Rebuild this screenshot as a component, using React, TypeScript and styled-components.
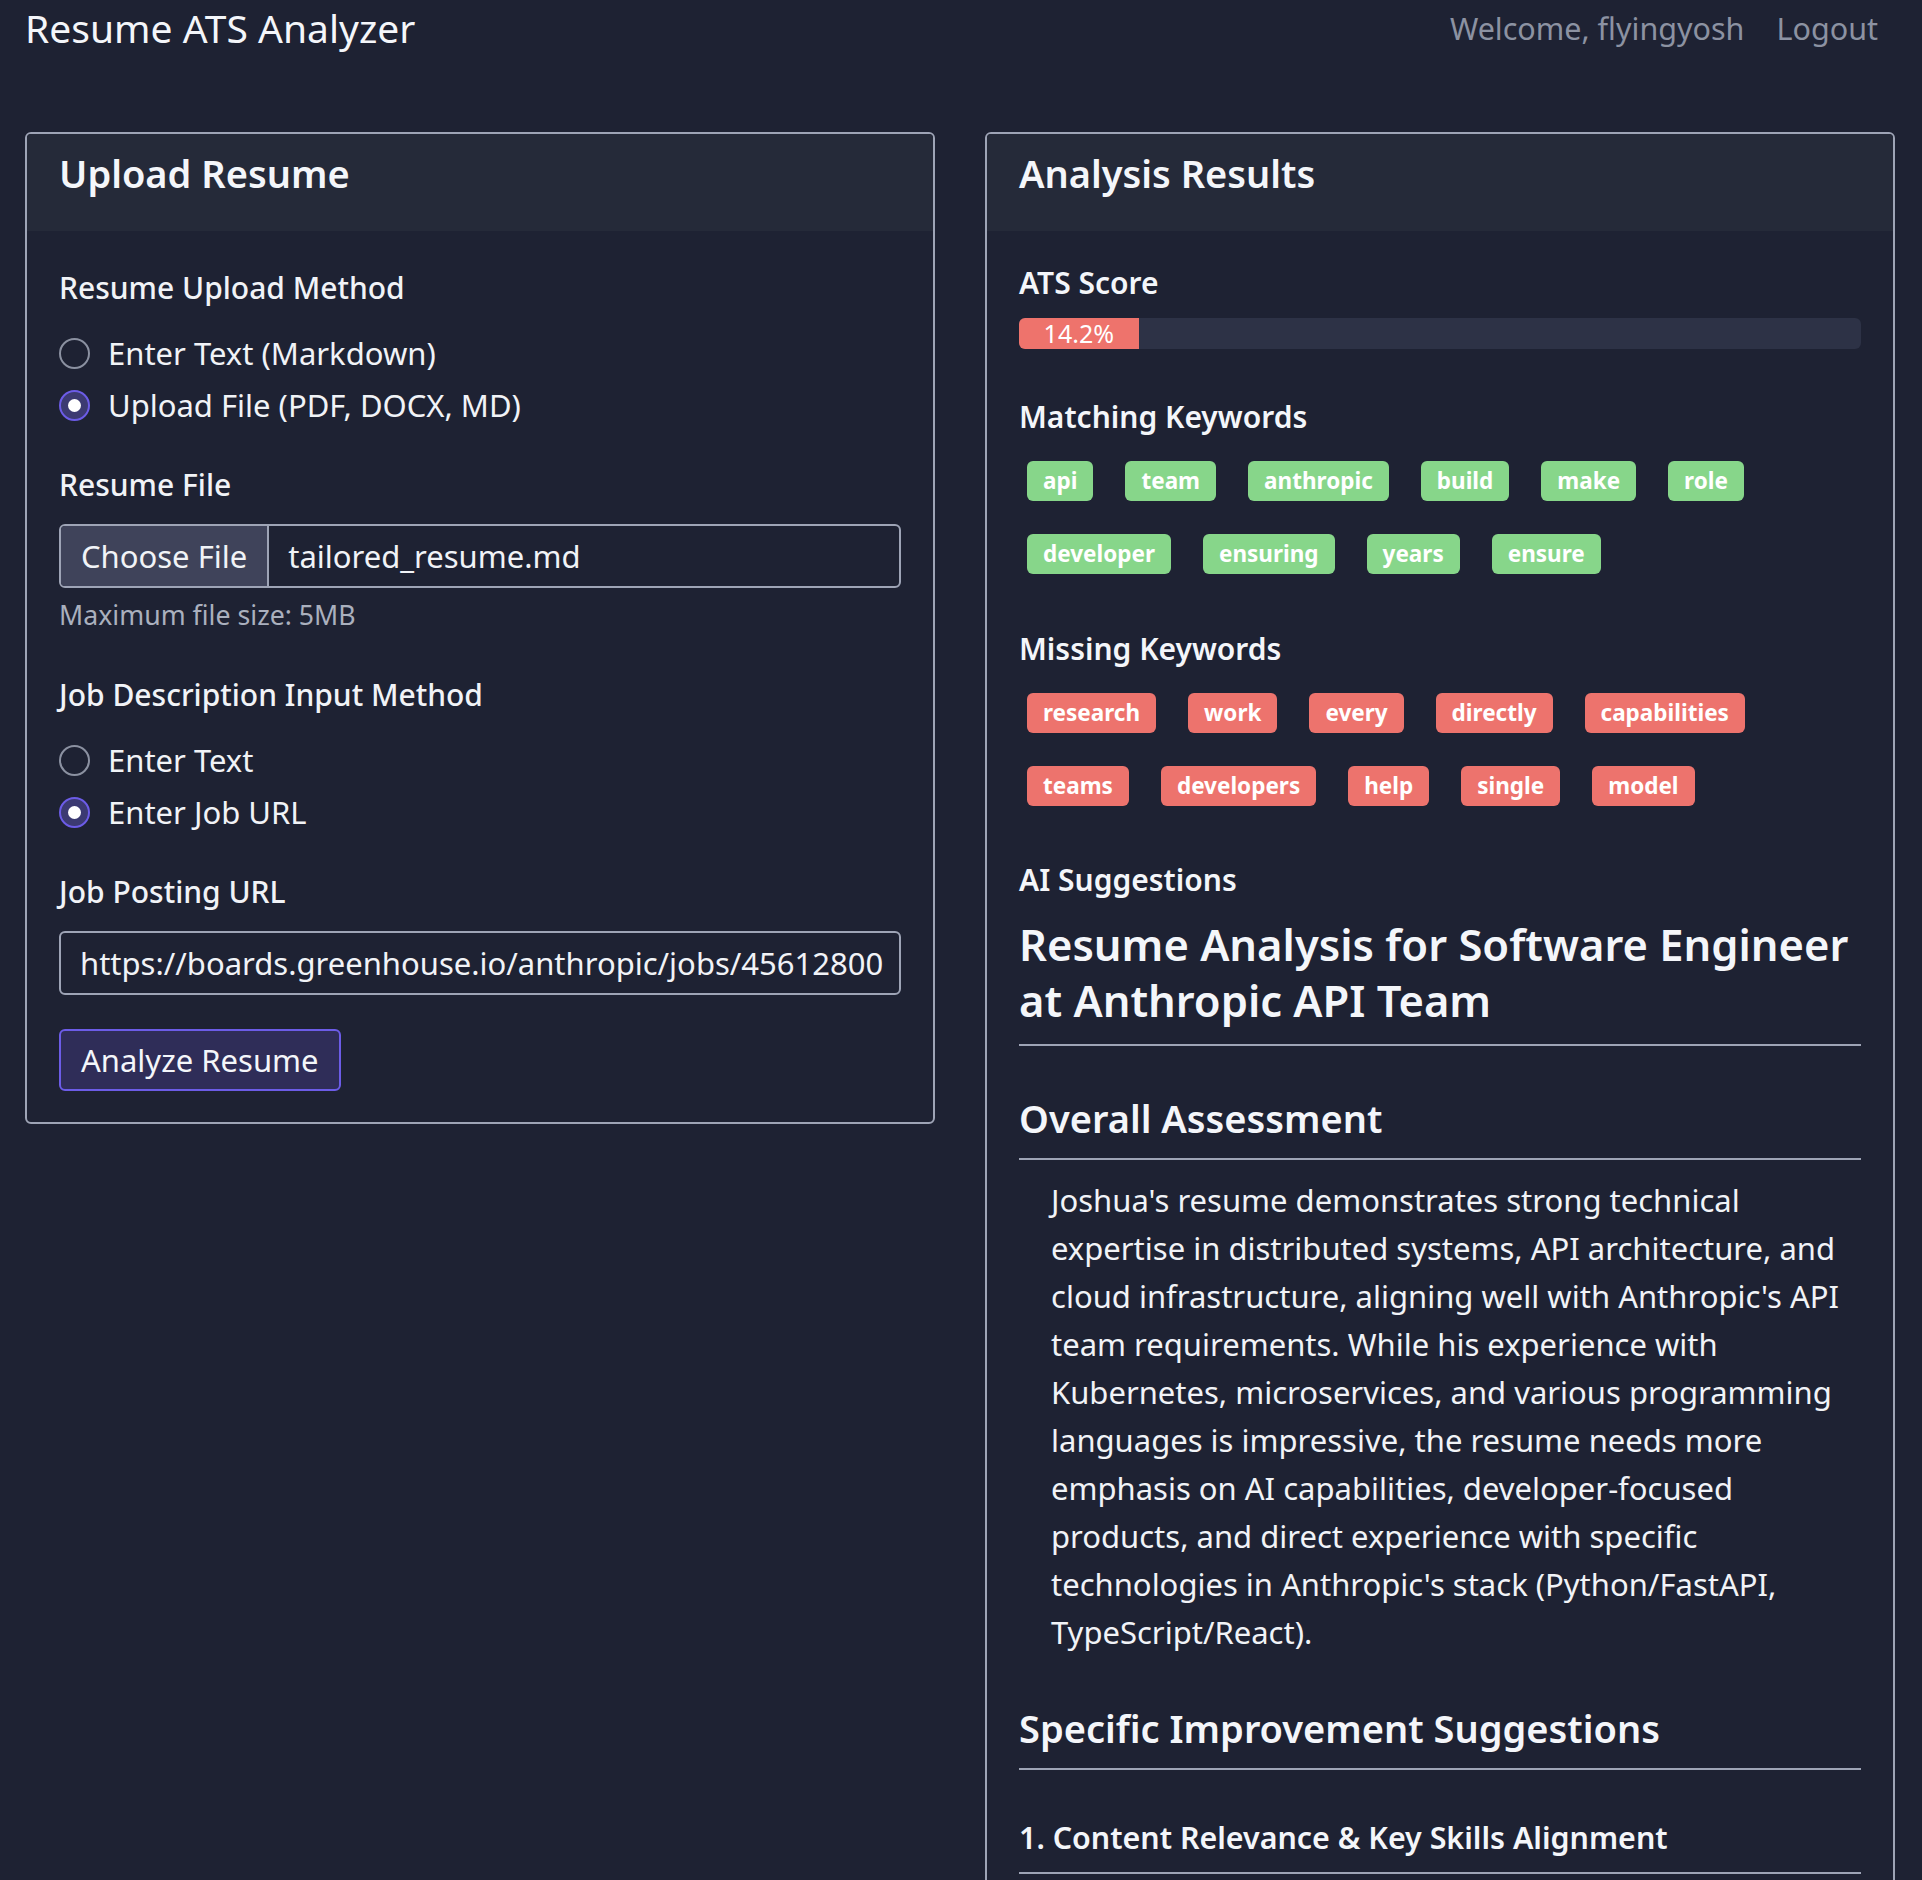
import React from 'react';
import styled, { createGlobalStyle } from 'styled-components';

const GlobalStyle = createGlobalStyle`
  html, body { margin: 0; padding: 0; background: #1e2233; }
  body {
    font-family: "Noto Sans", "Open Sans", sans-serif;
    color: #f1f3f7;
  }
  * { box-sizing: border-box; }
`;

const Page = styled.div`
  padding: 4px 27px 0 25px;
`;

const TopBar = styled.header`
  display: flex;
  justify-content: space-between;
  align-items: flex-start;
  height: 128px;
`;

const AppTitle = styled.h1`
  margin: 0;
  font-size: 39px;
  line-height: 48px;
  font-weight: 400;
  color: #f4f6fa;
`;

const UserNav = styled.nav`
  display: flex;
  align-items: center;
  gap: 16px;
`;

const NavItem = styled.span<{ $link?: boolean }>`
  font-size: 30.5px;
  line-height: 48px;
  color: #8c92a2;
  padding: ${(p) => (p.$link ? '0 17px 0 16px' : '0')};
  cursor: ${(p) => (p.$link ? 'pointer' : 'default')};
`;

const Columns = styled.main`
  display: grid;
  grid-template-columns: 1fr 1fr;
  gap: 50px;
  align-items: start;
`;

const Panel = styled.section`
  border: 2px solid #9ea4b6;
  border-radius: 6px;
  overflow: hidden;
`;

const PanelHeader = styled.div`
  background: #252a39;
  height: 97px;
  padding: 15px 32px 0;
`;

const PanelTitle = styled.h2`
  margin: 0;
  font-size: 38px;
  line-height: 48px;
  font-weight: 600;
  color: #f4f6fa;
`;

const PanelBody = styled.div<{ $top: number }>`
  padding: ${(p) => p.$top}px 32px 31px;
`;

const FieldGroup = styled.div<{ $mb: number }>`
  margin-bottom: ${(p) => p.$mb}px;
`;

const FieldLabel = styled.label`
  display: block;
  font-size: 30px;
  line-height: 40px;
  font-weight: 500;
  color: #f1f3f7;
  margin-bottom: 19px;
`;

const RadioRow = styled.label`
  display: flex;
  align-items: center;
  gap: 18px;
  height: 52px;
  font-size: 31px;
  color: #f1f3f7;
  cursor: pointer;
`;

const RadioCircle = styled.span<{ $checked?: boolean }>`
  width: 31px;
  height: 31px;
  flex: none;
  border-radius: 50%;
  border: 2px solid ${(p) => (p.$checked ? '#6c5ce7' : '#8b91a1')};
  background: ${(p) => (p.$checked ? '#3c3a72' : 'transparent')};
  display: flex;
  align-items: center;
  justify-content: center;
  &::after {
    content: '';
    display: ${(p) => (p.$checked ? 'block' : 'none')};
    width: 13px;
    height: 13px;
    border-radius: 50%;
    background: #ffffff;
  }
`;

const FileBox = styled.div`
  display: flex;
  height: 64px;
  border: 2px solid #9ea4b6;
  border-radius: 6px;
  overflow: hidden;
  font-size: 31px;
  color: #f1f3f7;
  white-space: nowrap;
`;

const FileButton = styled.span`
  display: flex;
  align-items: center;
  flex: none;
  padding: 0 20px;
  background: #3f435a;
  border-right: 2px solid #9ea4b6;
`;

const FileName = styled.span`
  display: flex;
  align-items: center;
  padding-left: 19px;
`;

const Hint = styled.div`
  margin-top: 7px;
  font-size: 26.7px;
  line-height: 40px;
  color: #aab0be;
`;

const TextInput = styled.input`
  display: block;
  width: 100%;
  height: 64px;
  border: 2px solid #9ea4b6;
  border-radius: 6px;
  background: transparent;
  padding: 0 10px 0 19px;
  font-family: inherit;
  font-size: 31px;
  color: #f1f3f7;
  outline: none;
`;

const PrimaryButton = styled.button`
  margin-top: 34px;
  height: 62px;
  padding: 0 20px;
  border: 2px solid #6c5ce7;
  border-radius: 6px;
  background: #2f2d58;
  color: #f4f6fa;
  font-family: inherit;
  font-size: 31px;
  cursor: pointer;
`;

const Section = styled.div<{ $mb: number }>`
  margin-bottom: ${(p) => p.$mb}px;
`;

const SectionTitle = styled.h3`
  margin: 0;
  font-size: 30px;
  line-height: 40px;
  font-weight: 600;
  color: #f4f6fa;
`;

const ScoreTrack = styled.div`
  display: flex;
  margin-top: 15px;
  height: 31px;
  border-radius: 6px;
  background: #2d3246;
`;

const ScoreFill = styled.div`
  display: flex;
  align-items: center;
  justify-content: center;
  height: 100%;
  border-radius: 6px 0 0 6px;
  background: #ee736c;
  color: #ffffff;
  font-size: 25px;
  line-height: 1;
  white-space: nowrap;
`;

const TagList = styled.div`
  display: flex;
  flex-wrap: wrap;
  column-gap: 32px;
  row-gap: 33px;
  margin-top: 24px;
  padding-left: 8px;
`;

const Tag = styled.span<{ $variant: 'match' | 'miss' }>`
  display: inline-block;
  height: 40px;
  line-height: 40px;
  padding: 0 16px;
  border-radius: 6px;
  font-size: 22.5px;
  font-weight: 700;
  color: #ffffff;
  background: ${(p) => (p.$variant === 'match' ? '#87d68a' : '#ed736d')};
`;

const Markdown = styled.div`
  margin-top: 16px;
`;

const MdH1 = styled.h1`
  margin: 0;
  font-size: 43.5px;
  line-height: 56px;
  font-weight: 600;
  color: #f4f6fa;
  padding-bottom: 16px;
  border-bottom: 2px solid #9ea4b6;
`;

const MdH2 = styled.h2`
  margin: 48px 0 0;
  font-size: 38px;
  line-height: 48px;
  font-weight: 600;
  color: #f4f6fa;
  padding-bottom: 16px;
  border-bottom: 2px solid #9ea4b6;
`;

const MdH3 = styled.h3`
  margin: 48px 0 0;
  font-size: 30.4px;
  line-height: 40px;
  font-weight: 600;
  color: #f4f6fa;
  padding-bottom: 14px;
  border-bottom: 2px solid #9ea4b6;
`;

const MdP = styled.p`
  margin: 16px 0 0 32px;
  font-size: 31px;
  line-height: 48px;
  color: #f1f3f7;
`;

const matching = ['api', 'team', 'anthropic', 'build', 'make', 'role', 'developer', 'ensuring', 'years', 'ensure'];
const missing = ['research', 'work', 'every', 'directly', 'capabilities', 'teams', 'developers', 'help', 'single', 'model'];

function Radio({ label, checked }: { label: string; checked?: boolean }) {
  return (
    <RadioRow>
      <RadioCircle $checked={checked} />
      {label}
    </RadioRow>
  );
}

export default function App() {
  const score = 14.2;
  const scoreText = `${score}%`;
  return (
    <>
      <GlobalStyle />
      <Page>
        <TopBar>
          <AppTitle>Resume ATS Analyzer</AppTitle>
          <UserNav>
            <NavItem>Welcome, flyingyosh</NavItem>
            <NavItem $link>Logout</NavItem>
          </UserNav>
        </TopBar>
        <Columns>
          <Panel>
            <PanelHeader>
              <PanelTitle>Upload Resume</PanelTitle>
            </PanelHeader>
            <PanelBody $top={37}>
              <FieldGroup $mb={34}>
                <FieldLabel>Resume Upload Method</FieldLabel>
                <Radio label="Enter Text (Markdown)" />
                <Radio label="Upload File (PDF, DOCX, MD)" checked />
              </FieldGroup>
              <FieldGroup $mb={40}>
                <FieldLabel>Resume File</FieldLabel>
                <FileBox>
                  <FileButton>Choose File</FileButton>
                  <FileName>tailored_resume.md</FileName>
                </FileBox>
                <Hint>Maximum file size: 5MB</Hint>
              </FieldGroup>
              <FieldGroup $mb={34}>
                <FieldLabel>Job Description Input Method</FieldLabel>
                <Radio label="Enter Text" />
                <Radio label="Enter Job URL" checked />
              </FieldGroup>
              <FieldGroup $mb={0}>
                <FieldLabel>Job Posting URL</FieldLabel>
                <TextInput readOnly value="https://boards.greenhouse.io/anthropic/jobs/45612800" />
                <PrimaryButton>Analyze Resume</PrimaryButton>
              </FieldGroup>
            </PanelBody>
          </Panel>
          <Panel>
            <PanelHeader>
              <PanelTitle>Analysis Results</PanelTitle>
            </PanelHeader>
            <PanelBody $top={32}>
              <Section $mb={48}>
                <SectionTitle>ATS Score</SectionTitle>
                <ScoreTrack>
                  <ScoreFill style={{ width: `${score}%` }}>{scoreText}</ScoreFill>
                </ScoreTrack>
              </Section>
              <Section $mb={55}>
                <SectionTitle>Matching Keywords</SectionTitle>
                <TagList>
                  {matching.map((k) => (
                    <Tag key={k} $variant="match">{k}</Tag>
                  ))}
                </TagList>
              </Section>
              <Section $mb={54}>
                <SectionTitle>Missing Keywords</SectionTitle>
                <TagList>
                  {missing.map((k) => (
                    <Tag key={k} $variant="miss">{k}</Tag>
                  ))}
                </TagList>
              </Section>
              <Section $mb={0}>
                <SectionTitle>AI Suggestions</SectionTitle>
                <Markdown>
                  <MdH1>Resume Analysis for Software Engineer at Anthropic API Team</MdH1>
                  <MdH2>Overall Assessment</MdH2>
                  <MdP>
                    Joshua's resume demonstrates strong technical expertise in distributed systems, API
                    architecture, and cloud infrastructure, aligning well with Anthropic's API team
                    requirements. While his experience with Kubernetes, microservices, and various
                    programming languages is impressive, the resume needs more emphasis on AI
                    capabilities, developer-focused products, and direct experience with specific
                    technologies in Anthropic's stack (Python/FastAPI, TypeScript/React).
                  </MdP>
                  <MdH2>Specific Improvement Suggestions</MdH2>
                  <MdH3>1. Content Relevance &amp; Key Skills Alignment</MdH3>
                </Markdown>
              </Section>
            </PanelBody>
          </Panel>
        </Columns>
      </Page>
    </>
  );
}
